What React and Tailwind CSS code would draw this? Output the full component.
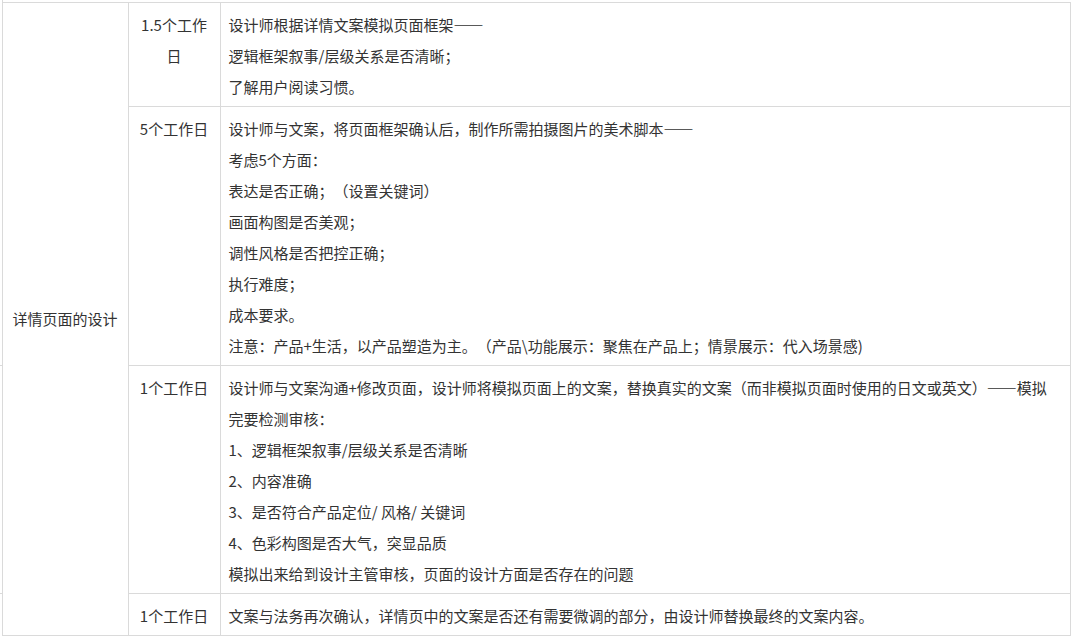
import React from "react";

const rows = [
  {
    days: "1.5个工作日",
    lines: [
      "设计师根据详情文案模拟页面框架——",
      "逻辑框架叙事/层级关系是否清晰；",
      "了解用户阅读习惯。",
    ],
  },
  {
    days: "5个工作日",
    lines: [
      "设计师与文案，将页面框架确认后，制作所需拍摄图片的美术脚本——",
      "考虑5个方面：",
      "表达是否正确；（设置关键词）",
      "画面构图是否美观；",
      "调性风格是否把控正确；",
      "执行难度；",
      "成本要求。",
      "注意：产品+生活，以产品塑造为主。（产品\\功能展示：聚焦在产品上；情景展示：代入场景感)",
    ],
  },
  {
    days: "1个工作日",
    lines: [
      <>
        设计师与文案沟通+修改页面，设计师将模拟页面上的文案，替换真实的文案（而非模拟页面时使用的日文或英文）——模拟
        <br />
        完要检测审核：
      </>,
      "1、逻辑框架叙事/层级关系是否清晰",
      "2、内容准确",
      "3、是否符合产品定位/ 风格/ 关键词",
      "4、色彩构图是否大气，突显品质",
      "模拟出来给到设计主管审核，页面的设计方面是否存在的问题",
    ],
  },
  {
    days: "1个工作日",
    lines: [
      "文案与法务再次确认，详情页中的文案是否还有需要微调的部分，由设计师替换最终的文案内容。",
    ],
  },
];

const cell = "border border-[#dadada] px-[8px] pt-[6px] pb-[4px] align-top";

export default function App() {
  return (
    <div
      lang="zh-CN"
      className="w-[1072px] h-[636px] overflow-hidden bg-white text-[15px] leading-[31px] text-[#333333] [text-spacing-trim:space-all] font-['Noto_Sans_CJK_SC','Noto_Sans',sans-serif]"
    >
      <table className="table-fixed border-collapse w-[1070px]">
        <colgroup>
          <col className="w-[2px]" />
          <col className="w-[126px]" />
          <col className="w-[92px]" />
          <col className="w-[850px]" />
        </colgroup>
        <tbody>
          <tr className="h-[2px]">
            <td className="p-0" />
            <td colSpan={3} className="p-0 border-l border-b border-[#dadada]" />
          </tr>
          {rows.map((row, i) => (
            <tr key={i}>
              {i === 0 && <td rowSpan={2} className="p-0" />}
              {i >= 2 && <td className="p-0 border-t border-[#dadada]" />}
              {i === 0 && (
                <td
                  rowSpan={4}
                  className="border border-[#dadada] px-[8px] text-center align-middle"
                >
                  详情页面的设计
                </td>
              )}
              <td className={cell + " text-center"}>{row.days}</td>
              <td className={cell}>
                {row.lines.map((line, j) => (
                  <p key={j}>{line}</p>
                ))}
              </td>
            </tr>
          ))}
        </tbody>
      </table>
    </div>
  );
}
